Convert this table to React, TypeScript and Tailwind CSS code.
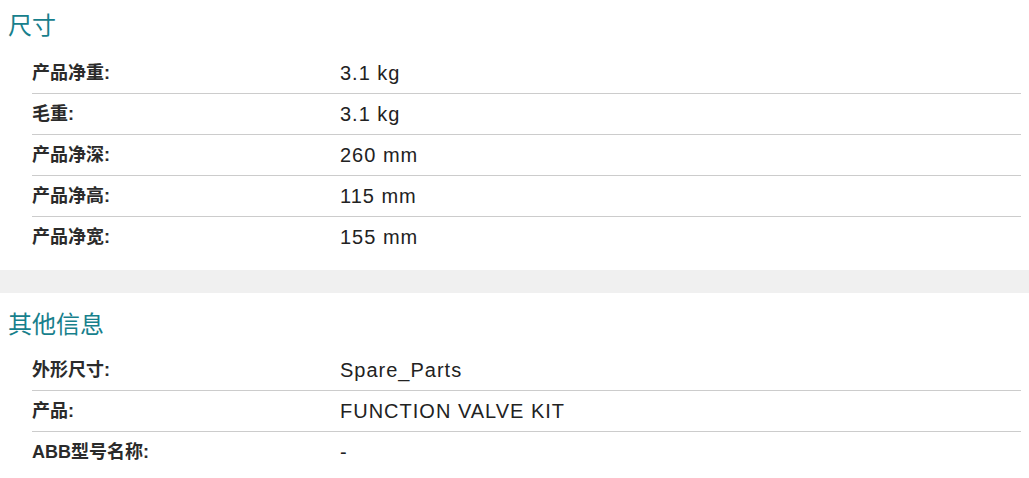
const sections = [
  {
    title: "尺寸",
    rows: [
      ["产品净重:", "3.1 kg"],
      ["毛重:", "3.1 kg"],
      ["产品净深:", "260 mm"],
      ["产品净高:", "115 mm"],
      ["产品净宽:", "155 mm"],
    ],
  },
  {
    title: "其他信息",
    rows: [
      ["外形尺寸:", "Spare_Parts"],
      ["产品:", "FUNCTION VALVE KIT"],
      ["ABB型号名称:", "-"],
    ],
  },
];

export default function App() {
  return (
    <div
      className="w-[1029px] h-[478px] overflow-hidden bg-white text-[#333]"
      style={{ fontFamily: '"Liberation Sans", Arial, "Noto Sans CJK SC", sans-serif' }}
    >
      {sections.map((section, i) => (
        <div key={section.title}>
          {i > 0 && <div className="h-[23px] bg-[#f0f0f0]" />}
          <section className={i === 0 ? "pt-[10px] pb-[13px]" : "pt-[16px] pb-[13px]"}>
            {/* section heading */}
            <h2 className="pl-2 text-[24px] leading-[32px] text-[#17808c] mb-[11px]">
              {section.title}
            </h2>
            <div className={i === 0 ? "ml-8 mr-2" : "ml-8 mr-2 -mt-[2px]"}>
              {section.rows.map(([label, value], j) => (
                <div
                  key={label}
                  className={
                    "flex items-center h-[40px] box-content " +
                    (j < section.rows.length - 1 ? "border-b border-[#cccccc]" : "")
                  }
                >
                  <div className="w-[308px] shrink-0 text-[18px] font-bold text-[#2b2b2b]">{label}</div>
                  <div className="text-[20px] tracking-[1px] text-[#222]">{value}</div>
                </div>
              ))}
            </div>
          </section>
        </div>
      ))}
    </div>
  );
}
